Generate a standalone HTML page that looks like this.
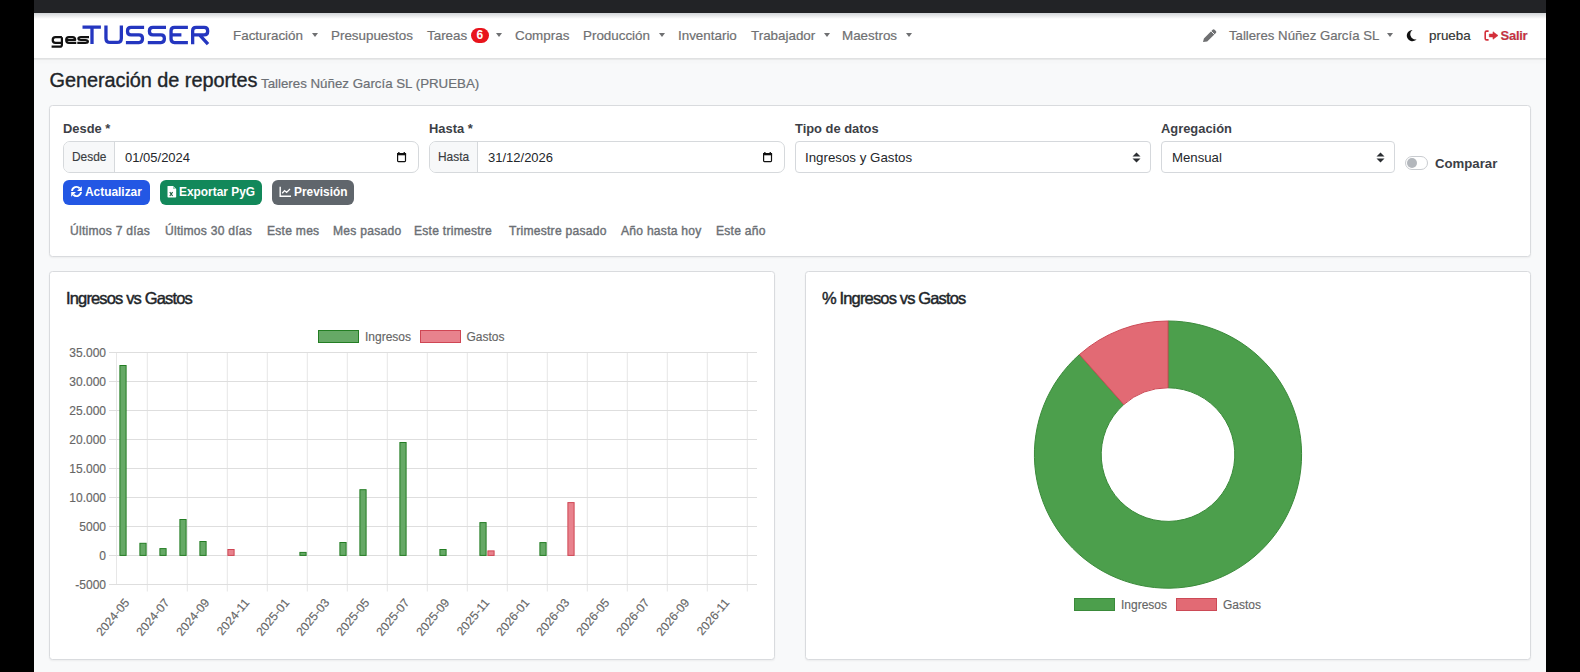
<!DOCTYPE html>
<html><head><meta charset="utf-8">
<style>
*{box-sizing:border-box;margin:0;padding:0}
html,body{width:1580px;height:672px;overflow:hidden;background:#000;font-family:"Liberation Sans",sans-serif;position:relative}
body>div,body>svg{position:absolute}
.t{white-space:nowrap;line-height:1}
#page{left:34px;top:0;width:1512px;height:672px;background:#f8f9fa}
#topbar{left:34px;top:0;width:1512px;height:13px;background:#222326}
#nav{left:34px;top:13px;width:1512px;height:46px;background:#fff;border-bottom:1px solid #e0e1e2;box-shadow:0 1px 0 #e8e9e9,0 3px 4px rgba(0,0,0,.02)}
.nl{top:28.5px;font-size:13.4px;color:#6f7072;-webkit-text-stroke:0.2px #6f7072}
.caret{top:33px;width:0;height:0;border-left:3.5px solid transparent;border-right:3.5px solid transparent;border-top:4px solid #6f7072}
.card{background:#fff;border:1px solid #d9dbde;border-radius:3.5px;box-shadow:0 1px 2px rgba(0,0,0,.05)}
.lbl{top:123px;font-weight:700;font-size:12.9px;color:#3c4046}
.ig{top:141px;height:32px;border:1px solid #d6d9dc;border-radius:7px;background:#fff;overflow:hidden}
.add{top:142px;height:30px;background:#f7f8f9;border-right:1px solid #d6d9dc;border-radius:6px 0 0 6px}
.val{top:151px;font-size:13px;color:#24272b}
.btn{top:180px;height:25px;border-radius:6px}
.btxt{top:187px;color:#fff;font-weight:700;font-size:11.9px}
.ql{top:225px;font-size:12.1px;letter-spacing:0.25px;font-weight:400;-webkit-text-stroke:0.4px #6c7075;color:#6c7075}
.sel{top:141px;height:32px;border:1px solid #d5d8dc;border-radius:4px;background:#fff}
</style></head><body>
<div id="page"></div>
<div id="topbar"></div>
<div id="nav"></div>
<div style="left:34px;top:13px;width:1512px;height:6px;background:linear-gradient(#d2d5d8,rgba(255,255,255,0))"></div>

<!-- logo -->
<svg style="left:48px;top:22px" width="170" height="30" viewBox="48 22 170 30">
  <g fill="none" stroke="#2436c0" stroke-width="3.3" stroke-linejoin="round">
    <path d="M82.5 27.05H100.9M92 27V43.9"/>
    <path d="M105.95 25.4V38.2Q105.95 42.45 110.2 42.45H117.1Q121.35 42.45 121.35 38.2V25.4"/>
    <path d="M144.1 27.35H131Q127.55 27.35 127.55 30.8V31.4Q127.55 34.8 131 34.8H139Q142.45 34.8 142.45 38.2V39.1Q142.45 42.55 139 42.55H125.9"/>
    <path d="M166 27.35H152.9Q149.45 27.35 149.45 30.8V31.4Q149.45 34.8 152.9 34.8H160.9Q164.35 34.8 164.35 38.2V39.1Q164.35 42.55 160.9 42.55H147.8"/>
    <path d="M187.9 27.35H174.5Q171.05 27.35 171.05 30.8V39.1Q171.05 42.55 174.5 42.55H187.9M171.05 34.8H181.4"/>
    <path d="M192.65 44.2V30.8Q192.65 27.35 196.1 27.35H204.2Q207.65 27.35 207.65 30.8V31.4Q207.65 34.8 204.2 34.8H192.65M199.5 34.8L208 44.2"/>
  </g>
  <g fill="none" stroke="#111" stroke-width="2.2" stroke-linejoin="round">
    <path d="M61.9 37.2H55.5Q52.7 37.2 52.7 40Q52.7 42.8 55.5 42.8H61.9M61.9 37.2V44.7Q61.9 46.7 59.9 46.7H51.6"/>
    <path d="M76.3 42.8H68.9Q66.2 42.8 66.2 40Q66.2 37.2 68.9 37.2H72.5Q75.2 37.2 75.2 40H66.2"/>
    <path d="M89 37.2H81Q78.4 37.2 78.4 38.6Q78.4 40 81 40H85.3Q87.9 40 87.9 41.4Q87.9 42.8 85.3 42.8H77.3"/>
  </g>
</svg>

<div class="t nl" style="left:233px">Facturación</div><div class="caret" style="left:312px"></div>
<div class="t nl" style="left:331px">Presupuestos</div>
<div class="t nl" style="left:427px">Tareas</div>
<div class="t" style="left:471px;top:28px;width:17.5px;height:15px;border-radius:8px;background:#e8141c;color:#fff;font-size:12px;font-weight:700;line-height:15px;text-align:center">6</div>
<div class="caret" style="left:496px"></div>
<div class="t nl" style="left:515px">Compras</div>
<div class="t nl" style="left:583px">Producción</div><div class="caret" style="left:659px"></div>
<div class="t nl" style="left:678px">Inventario</div>
<div class="t nl" style="left:751px">Trabajador</div><div class="caret" style="left:824px"></div>
<div class="t nl" style="left:842px">Maestros</div><div class="caret" style="left:906px"></div>

<!-- pencil -->
<svg style="left:1202px;top:28px" width="16" height="15" viewBox="0 0 16 15">
  <path d="M1 14L1.9 10.4L10.6 1.8Q11.6 0.8 12.6 1.8L13.9 3.1Q14.9 4.1 13.9 5.1L5.2 13.4Z" fill="#6f7072"/><path d="M9.1 3.1L12.6 6.6" stroke="#fff" stroke-width="0.9"/>
</svg>
<div class="t nl" style="left:1229px;font-size:13.2px">Talleres Núñez García SL</div><div class="caret" style="left:1387px"></div>
<!-- moon -->
<svg style="left:1404px;top:29px" width="14" height="13" viewBox="0 0 14 13">
  <path d="M8.5 1A5.6 5.6 0 1 0 12.6 10.3A5.2 5.2 0 0 1 8.5 1Z" fill="#111"/>
</svg>
<div class="t nl" style="left:1429px;color:#1d1f22">prueba</div>
<!-- sign-out -->
<svg style="left:1484px;top:29px" width="16" height="13" viewBox="0 0 16 13">
  <path d="M4.6 2.1H2.6Q1.2 2.1 1.2 3.5V9.5Q1.2 10.9 2.6 10.9H4.6" fill="none" stroke="#d32f3a" stroke-width="1.6"/>
  <path d="M5.3 5.1H9V2.8L14 6.5L9 10.2V7.9H5.3Z" fill="#d32f3a" stroke="#d32f3a" stroke-width="0.6" stroke-linejoin="round"/>
</svg>
<div class="t nl" style="left:1500.5px;top:29px;color:#d22b3b;font-weight:700;font-size:13px;letter-spacing:-0.25px">Salir</div>

<div class="t" style="left:49.5px;top:71px;font-size:19.9px;letter-spacing:-0.05px;-webkit-text-stroke:0.35px #212529;color:#212529">Generación de reportes</div>
<div class="t" style="left:261px;top:76.5px;font-size:13.3px;-webkit-text-stroke:0.2px #6c7075;color:#6c7075">Talleres Núñez García SL (PRUEBA)</div>

<!-- filter card -->
<div class="card" style="left:49px;top:105px;width:1482px;height:152px"></div>
<div class="t lbl" style="left:63px">Desde *</div>
<div class="t lbl" style="left:429px">Hasta *</div>
<div class="t lbl" style="left:795px">Tipo de datos</div>
<div class="t lbl" style="left:1161px">Agregación</div>

<div class="ig" style="left:63px;width:356px"></div>
<div class="add" style="left:64px;width:51px"></div>
<div class="t val" style="left:72px;top:151.5px;font-size:11.9px;-webkit-text-stroke:0.15px #3a3d41;color:#3a3d41">Desde</div>
<div class="t val" style="left:125px">01/05/2024</div>
<svg style="left:396px;top:151px" width="11" height="12" viewBox="0 0 11 12"><rect x="1.6" y="2.6" width="7.9" height="8" rx="0.8" fill="none" stroke="#111" stroke-width="1.2"/><rect x="1" y="2" width="9.1" height="2.3" fill="#111"/><rect x="2.2" y="1" width="1.3" height="1.5" fill="#111"/><rect x="7.6" y="1" width="1.3" height="1.5" fill="#111"/></svg>

<div class="ig" style="left:429px;width:356px"></div>
<div class="add" style="left:430px;width:48px"></div>
<div class="t val" style="left:438px;top:151.5px;font-size:11.9px;-webkit-text-stroke:0.15px #3a3d41;color:#3a3d41">Hasta</div>
<div class="t val" style="left:488px">31/12/2026</div>
<svg style="left:762px;top:151px" width="11" height="12" viewBox="0 0 11 12"><rect x="1.6" y="2.6" width="7.9" height="8" rx="0.8" fill="none" stroke="#111" stroke-width="1.2"/><rect x="1" y="2" width="9.1" height="2.3" fill="#111"/><rect x="2.2" y="1" width="1.3" height="1.5" fill="#111"/><rect x="7.6" y="1" width="1.3" height="1.5" fill="#111"/></svg>

<div class="sel" style="left:795px;width:356px"></div>
<div class="t val" style="left:805px;font-size:13.3px">Ingresos y Gastos</div>
<svg style="left:1132px;top:152px" width="9" height="11" viewBox="0 0 9 11"><path d="M0.5 4.5L4.5 0.5L8.5 4.5ZM0.5 6.5L4.5 10.5L8.5 6.5Z" fill="#2b2e32"/></svg>

<div class="sel" style="left:1161px;width:234px"></div>
<div class="t val" style="left:1172px;font-size:13.2px">Mensual</div>
<svg style="left:1376px;top:152px" width="9" height="11" viewBox="0 0 9 11"><path d="M0.5 4.5L4.5 0.5L8.5 4.5ZM0.5 6.5L4.5 10.5L8.5 6.5Z" fill="#2b2e32"/></svg>

<div style="left:1405px;top:156px;width:23px;height:14px;border:1px solid #c9ccd0;border-radius:7px;background:#fff"></div>
<div style="left:1407px;top:158px;width:10px;height:10px;border-radius:5px;background:#b3b7bc"></div>
<div class="t" style="left:1435px;top:157px;font-size:13.2px;font-weight:700;color:#3c4046">Comparar</div>

<div class="btn" style="left:63px;width:87px;background:#2357e4"></div>
<div class="t btxt" style="left:85px">Actualizar</div>
<div class="btn" style="left:160px;width:102px;background:#12885a"></div>
<div class="t btxt" style="left:179px">Exportar PyG</div>
<div class="btn" style="left:272px;width:82px;background:#60666c"></div>
<div class="t btxt" style="left:294px">Previsión</div>


<svg style="left:70px;top:185px" width="13" height="13" viewBox="0 0 13 13">
  <g fill="none" stroke="#fff" stroke-width="1.9"><path d="M2 6A4.5 4.5 0 0 1 9.6 3.2"/><path d="M11 7A4.5 4.5 0 0 1 3.4 9.8"/></g>
  <path d="M11.8 1.2V6H7Z M1.2 11.8V7H6Z" fill="#fff"/>
</svg>
<svg style="left:167px;top:185px" width="10" height="13" viewBox="0 0 10 13">
  <path d="M0.5 1.6Q0.5 0.9 1.2 0.9H6L9.2 4.1V11.7Q9.2 12.4 8.5 12.4H1.2Q0.5 12.4 0.5 11.7Z" fill="#fff"/>
  <path d="M6 0.9V4.1H9.2Z" fill="#9ccfb5"/>
  <path d="M2.8 7.2L5.6 11M5.6 7.2L2.8 11" stroke="#1d5f40" stroke-width="1.1"/>
</svg>
<svg style="left:279px;top:186px" width="13" height="12" viewBox="0 0 13 12">
  <path d="M1.2 0.8V10.2H12" fill="none" stroke="#fff" stroke-width="1.4"/>
  <path d="M3.2 7.2L5.6 4.6L7.6 6.4L11 3" fill="none" stroke="#fff" stroke-width="1.3"/>
</svg>
<div class="t ql" style="left:70px">Últimos 7 días</div>
<div class="t ql" style="left:165px">Últimos 30 días</div>
<div class="t ql" style="left:267px">Este mes</div>
<div class="t ql" style="left:333px">Mes pasado</div>
<div class="t ql" style="left:414px">Este trimestre</div>
<div class="t ql" style="left:509px">Trimestre pasado</div>
<div class="t ql" style="left:621px">Año hasta hoy</div>
<div class="t ql" style="left:716px">Este año</div>

<!-- chart cards -->
<div class="card" style="left:49px;top:271px;width:726px;height:389px"></div>
<div class="card" style="left:805px;top:271px;width:726px;height:389px"></div>
<div class="t" style="left:66px;top:289.5px;font-size:16.5px;letter-spacing:-0.85px;-webkit-text-stroke:0.45px #212529;color:#212529">Ingresos vs Gastos</div>
<div class="t" style="left:822px;top:289.5px;font-size:16.5px;letter-spacing:-0.85px;-webkit-text-stroke:0.45px #212529;color:#212529">% Ingresos vs Gastos</div>

<!--CHART-->
<svg style="left:50px;top:272px" width="724" height="387" viewBox="50 272 724 387">
<g stroke="#e7e7e7" stroke-width="1">
<path d="M147.30 352V591.5"/>
<path d="M187.30 352V591.5"/>
<path d="M227.30 352V591.5"/>
<path d="M267.30 352V591.5"/>
<path d="M307.30 352V591.5"/>
<path d="M347.30 352V591.5"/>
<path d="M387.30 352V591.5"/>
<path d="M427.30 352V591.5"/>
<path d="M467.30 352V591.5"/>
<path d="M507.30 352V591.5"/>
<path d="M547.30 352V591.5"/>
<path d="M587.30 352V591.5"/>
<path d="M627.30 352V591.5"/>
<path d="M667.30 352V591.5"/>
<path d="M707.30 352V591.5"/>
<path d="M747.30 352V591.5"/>
<path d="M116.5 352V585"/>
</g>
<g stroke="#dedede" stroke-width="1">
<path d="M109 584.5H757"/>
<path d="M109 555.5H757"/>
<path d="M109 526.5H757"/>
<path d="M109 497.5H757"/>
<path d="M109 468.5H757"/>
<path d="M109 439.5H757"/>
<path d="M109 410.5H757"/>
<path d="M109 381.5H757"/>
<path d="M109 352.5H757"/>
</g>
<g font-family="Liberation Sans" font-size="12" fill="#666" stroke="#666" stroke-width="0.15" text-anchor="end">
<text x="106" y="588.7">-5000</text>
<text x="106" y="559.7">0</text>
<text x="106" y="530.7">5000</text>
<text x="106" y="501.7">10.000</text>
<text x="106" y="472.7">15.000</text>
<text x="106" y="443.7">20.000</text>
<text x="106" y="414.7">25.000</text>
<text x="106" y="385.7">30.000</text>
<text x="106" y="356.7">35.000</text>
</g>
<g font-family="Liberation Sans" font-size="12" fill="#666" stroke="#666" stroke-width="0.15" text-anchor="end">
<text transform="translate(130 603) rotate(-50)">2024-05</text>
<text transform="translate(170 603) rotate(-50)">2024-07</text>
<text transform="translate(210 603) rotate(-50)">2024-09</text>
<text transform="translate(250 603) rotate(-50)">2024-11</text>
<text transform="translate(290 603) rotate(-50)">2025-01</text>
<text transform="translate(330 603) rotate(-50)">2025-03</text>
<text transform="translate(370 603) rotate(-50)">2025-05</text>
<text transform="translate(410 603) rotate(-50)">2025-07</text>
<text transform="translate(450 603) rotate(-50)">2025-09</text>
<text transform="translate(490 603) rotate(-50)">2025-11</text>
<text transform="translate(530 603) rotate(-50)">2026-01</text>
<text transform="translate(570 603) rotate(-50)">2026-03</text>
<text transform="translate(610 603) rotate(-50)">2026-05</text>
<text transform="translate(650 603) rotate(-50)">2026-07</text>
<text transform="translate(690 603) rotate(-50)">2026-09</text>
<text transform="translate(730 603) rotate(-50)">2026-11</text>
</g>
<g stroke-width="1">
<rect x="119.9" y="365.5" width="6.2" height="189.9" fill="#66a966" stroke="#237d23"/>
<rect x="139.9" y="543.3" width="6.2" height="12.1" fill="#66a966" stroke="#237d23"/>
<rect x="159.9" y="548.6" width="6.2" height="6.8" fill="#66a966" stroke="#237d23"/>
<rect x="179.9" y="519.5" width="6.2" height="35.9" fill="#66a966" stroke="#237d23"/>
<rect x="199.9" y="541.5" width="6.2" height="13.9" fill="#66a966" stroke="#237d23"/>
<rect x="299.9" y="552.4" width="6.2" height="3.0" fill="#66a966" stroke="#237d23"/>
<rect x="339.9" y="542.5" width="6.2" height="12.9" fill="#66a966" stroke="#237d23"/>
<rect x="359.9" y="489.7" width="6.2" height="65.7" fill="#66a966" stroke="#237d23"/>
<rect x="399.9" y="442.5" width="6.2" height="112.9" fill="#66a966" stroke="#237d23"/>
<rect x="439.9" y="549.5" width="6.2" height="5.9" fill="#66a966" stroke="#237d23"/>
<rect x="479.9" y="522.6" width="6.2" height="32.8" fill="#66a966" stroke="#237d23"/>
<rect x="539.9" y="542.6" width="6.2" height="12.8" fill="#66a966" stroke="#237d23"/>
<rect x="227.9" y="549.5" width="6.2" height="5.9" fill="#e8828d" stroke="#cf4654"/>
<rect x="487.9" y="550.9" width="6.2" height="4.5" fill="#e8828d" stroke="#cf4654"/>
<rect x="567.9" y="502.6" width="6.2" height="52.8" fill="#e8828d" stroke="#cf4654"/>
</g>
<rect x="318.5" y="330.5" width="40" height="12" fill="#66a966" stroke="#237d23"/>
<text x="365" y="340.6" font-family="Liberation Sans" font-size="12" fill="#666" stroke="#666" stroke-width="0.15">Ingresos</text>
<rect x="420.5" y="330.5" width="40" height="12" fill="#e8828d" stroke="#cf4654"/>
<text x="466.5" y="340.6" font-family="Liberation Sans" font-size="12" fill="#666" stroke="#666" stroke-width="0.15">Gastos</text>
</svg>
<svg style="left:806px;top:272px" width="724" height="387" viewBox="806 272 724 387">
<path d="M1168.00 321.00A133.6 133.6 0 1 1 1079.47 354.54L1123.74 404.57A66.8 66.8 0 1 0 1168.00 387.80Z" fill="#4c9f4c" stroke="#3a8a3a" stroke-width="1"/>
<path d="M1079.47 354.54A133.6 133.6 0 0 1 1168.00 321.00L1168.00 387.80A66.8 66.8 0 0 0 1123.74 404.57Z" fill="#e26a74" stroke="#cc4a56" stroke-width="1"/>
<rect x="1074.5" y="598.5" width="40" height="12" fill="#4c9f4c" stroke="#3a8a3a"/>
<text x="1121" y="609" font-family="Liberation Sans" font-size="12" fill="#666" stroke="#666" stroke-width="0.15">Ingresos</text>
<rect x="1176.5" y="598.5" width="40" height="12" fill="#e26a74" stroke="#cc4a56"/>
<text x="1223" y="609" font-family="Liberation Sans" font-size="12" fill="#666" stroke="#666" stroke-width="0.15">Gastos</text>
</svg>
<!--/CHART-->
</body></html>
